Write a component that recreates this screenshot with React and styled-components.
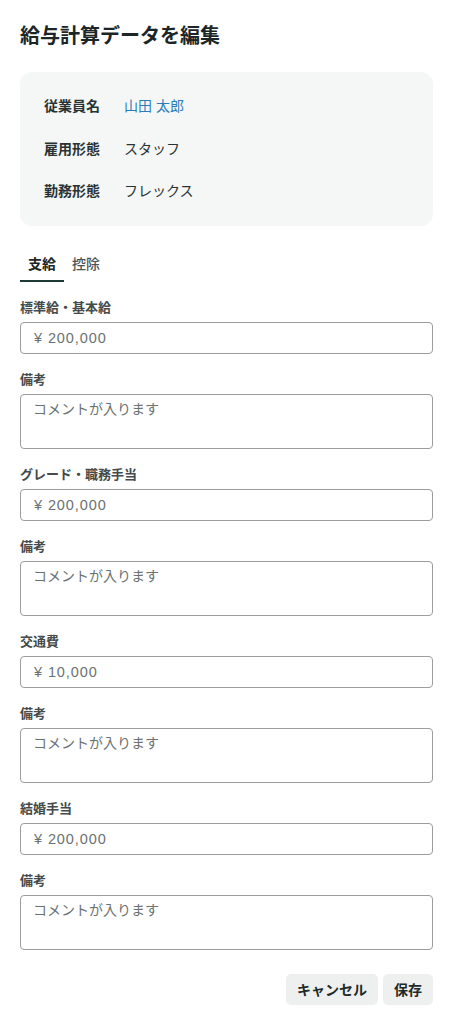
import React from "react";
import styled, { createGlobalStyle } from "styled-components";

const Global = createGlobalStyle`
  html, body { margin: 0; padding: 0; background: #ffffff; }
  body {
    font-family: "Liberation Sans", "Noto Sans CJK JP", "Noto Sans", sans-serif;
    color: #1f2a2a;
  }
  * { box-sizing: border-box; }
`;

const Page = styled.div`
  padding: 21px 22px 9px 20px;
  display: flex;
  flex-direction: column;
`;

const Title = styled.h1`
  margin: 0 0 21px;
  font-size: 20px;
  line-height: 30px;
  font-weight: 700;
  color: #1c2626;
`;

const InfoCard = styled.div`
  background: #f5f7f7;
  border-radius: 12px;
  padding: 24px;
  display: flex;
  flex-direction: column;
  gap: 22px;
  margin-bottom: 20px;
`;

const InfoRow = styled.div`
  display: flex;
  align-items: center;
  font-size: 14px;
  line-height: 20.5px;
`;

const InfoLabel = styled.div`
  width: 80px;
  font-weight: 700;
  color: #2a3333;
`;

const InfoValue = styled.div`
  color: ${(p) => (p.$link ? "#2b7bb9" : "#2a3333")};
`;

const Tabs = styled.div`
  display: flex;
  margin-bottom: 16px;
`;

const Tab = styled.div`
  padding: 8px 8px 6px;
  font-size: 14px;
  line-height: 20px;
  font-weight: ${(p) => (p.$active ? 700 : 500)};
  color: ${(p) => (p.$active ? "#1c2626" : "#4a5252")};
  border-bottom: 2px solid ${(p) => (p.$active ? "#1e3a34" : "transparent")};
`;

const Form = styled.div`
  display: flex;
  flex-direction: column;
  gap: 16px;
`;

const Field = styled.div`
  display: flex;
  flex-direction: column;
  gap: 4px;
`;

const Label = styled.label`
  font-size: 13px;
  line-height: 20px;
  font-weight: 700;
  color: #434b4b;
`;

const Input = styled.input`
  height: 32px;
  width: 100%;
  border: 1px solid #9a9e9e;
  border-radius: 4px;
  padding: 0 13px;
  font-family: inherit;
  font-size: 14.5px;
  letter-spacing: 0.9px;
  color: #5f6666;
  background: #fff;
  outline: none;
  &::placeholder { color: #6b7272; }
`;

const TextArea = styled.textarea`
  height: 55px;
  width: 100%;
  border: 1px solid #9a9e9e;
  border-radius: 4px;
  padding: 4px 12px;
  font-family: inherit;
  font-size: 14px;
  line-height: 20px;
  resize: none;
  background: #fff;
  outline: none;
  display: block;
  &::placeholder { color: #6b7272; }
`;

const Actions = styled.div`
  display: flex;
  justify-content: flex-end;
  gap: 5px;
  margin-top: 24px;
`;

const Button = styled.button`
  height: 31px;
  padding: 0 11px;
  border: none;
  border-radius: 5px;
  background: #eef0f0;
  font-family: inherit;
  font-size: 14px;
  font-weight: 700;
  color: #1f2a2a;
  cursor: pointer;
`;

const items = [
  { label: "標準給・基本給", value: "¥ 200,000" },
  { label: "グレード・職務手当", value: "¥ 200,000" },
  { label: "交通費", value: "¥ 10,000" },
  { label: "結婚手当", value: "¥ 200,000" },
];

export default function App() {
  return (
    <>
      <Global />
      <Page>
        <Title>給与計算データを編集</Title>
        <InfoCard>
          <InfoRow>
            <InfoLabel>従業員名</InfoLabel>
            <InfoValue $link>山田 太郎</InfoValue>
          </InfoRow>
          <InfoRow>
            <InfoLabel>雇用形態</InfoLabel>
            <InfoValue>スタッフ</InfoValue>
          </InfoRow>
          <InfoRow>
            <InfoLabel>勤務形態</InfoLabel>
            <InfoValue>フレックス</InfoValue>
          </InfoRow>
        </InfoCard>
        <Tabs>
          <Tab $active>支給</Tab>
          <Tab>控除</Tab>
        </Tabs>
        <Form>
          {items.map((it) => (
            <React.Fragment key={it.label}>
              <Field>
                <Label>{it.label}</Label>
                <Input placeholder={it.value} />
              </Field>
              <Field>
                <Label>備考</Label>
                <TextArea placeholder="コメントが入ります" />
              </Field>
            </React.Fragment>
          ))}
        </Form>
        <Actions>
          <Button>キャンセル</Button>
          <Button>保存</Button>
        </Actions>
      </Page>
    </>
  );
}
